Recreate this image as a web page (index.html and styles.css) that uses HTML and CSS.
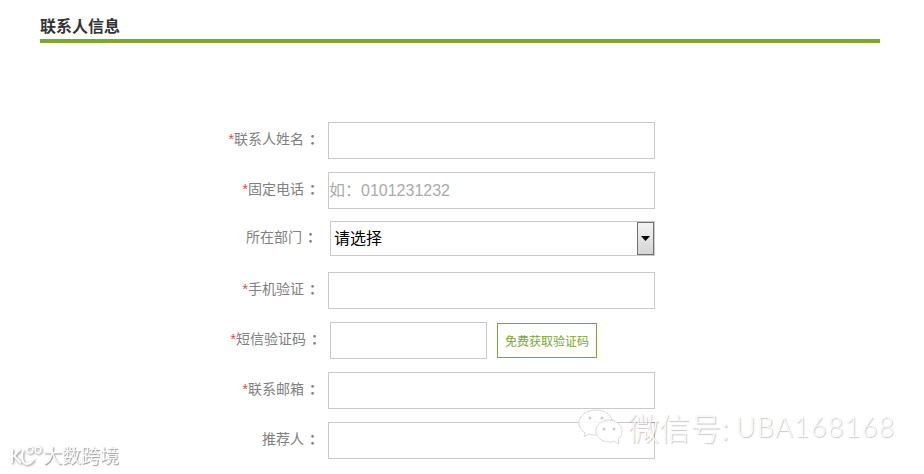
FILE: index.html
```html
<!DOCTYPE html>
<html lang="zh">
<head>
<meta charset="utf-8">
<title>联系人信息</title>
<link rel="stylesheet" href="styles.css">
</head>
<body>
<div class="page">
  <h2 class="title">联系人信息</h2>
  <form class="form">
    <div class="row">
      <label class="label"><i>*</i>联系人姓名<b>：</b></label>
      <input class="input" type="text">
    </div>
    <div class="row">
      <label class="label"><i>*</i>固定电话<b>：</b></label>
      <input class="input" type="text" placeholder="如：0101231232">
    </div>
    <div class="row row-select">
      <label class="label label-short">所在部门<b>：</b></label>
      <div class="select">
        <span class="select-text">请选择</span>
        <span class="select-btn"><svg width="9" height="5" viewBox="0 0 9 5"><path d="M0 0h9L4.500 5z" fill="#000"/></svg></span>
      </div>
    </div>
    <div class="row">
      <label class="label"><i>*</i>手机验证<b>：</b></label>
      <input class="input" type="text">
    </div>
    <div class="row">
      <label class="label label-wide"><i>*</i>短信验证码<b>：</b></label>
      <input class="input input-code" type="text">
      <button class="code-btn" type="button">免费获取验证码</button>
    </div>
    <div class="row">
      <label class="label"><i>*</i>联系邮箱<b>：</b></label>
      <input class="input" type="text">
    </div>
    <div class="row">
      <label class="label">推荐人<b>：</b></label>
      <input class="input" type="text">
    </div>
  </form>
  <div class="mark mark-left">
    <svg class="mark-logo" width="34" height="24" viewBox="0 0 34 24" fill="none" stroke="#fff" stroke-width="2">
      <path d="M3 4v14M11 4 5 11l7 7"/>
      <path d="M14 5c-2 7-1 14 4 14 3 0 5-2 7-5"/>
      <circle cx="21" cy="5" r="3" stroke-width="1.300"/>
      <circle cx="29" cy="5" r="3" stroke-width="1.300"/>
    </svg>
    <span>大数跨境</span>
  </div>
  <div class="mark mark-right">
    <svg class="mark-wechat" width="46" height="38" viewBox="0 0 46 38" fill="rgba(255,255,255,.85)" stroke="#d8d8d8" stroke-width="1">
      <path d="M19 2C9 2 2 8 2 15c0 4 2 7 6 10l-1 4 5-3c2 1 4 1 7 1 1 0 2 0 3-.3-2-7 3-14 13-14.500C34 6 27 2 19 2z"/>
      <path d="M32 12c-7 0-13 5-13 11s6 11 13 11c2 0 3 0 5-1l5 3-1-5c3-2 4-5 4-8 0-6-6-11-13-11z"/>
      <circle cx="13" cy="10" r="1.500" fill="#ccc" stroke="none"/>
      <circle cx="25" cy="10" r="1.500" fill="#ccc" stroke="none"/>
      <circle cx="27" cy="21" r="1.500" fill="#ccc" stroke="none"/>
      <circle cx="37" cy="21" r="1.500" fill="#ccc" stroke="none"/>
    </svg>
    <span class="mark-cjk">微信号:</span>
    <span class="mark-latin">UBA168168</span>
  </div>
</div>
</body>
</html>
```

FILE: styles.css
```css
* { box-sizing: border-box; }
html, body { margin: 0; padding: 0; background: #fff; }
.page {
  position: relative;
  width: 924px;
  height: 474px;
  overflow: hidden;
  padding: 0 44px 0 40px;
  font-family: "Liberation Sans", "Noto Sans CJK SC", sans-serif;
}
.title {
  margin: 0;
  height: 43px;
  padding-top: 16px;
  border-bottom: 4px solid #7aa82d;
  font-size: 16px;
  line-height: 21px;
  font-weight: bold;
  color: #333;
}
.form { padding-top: 79px; }
.row {
  display: flex;
  align-items: center;
  height: 37px;
  margin-bottom: 13px;
}
.label {
  width: 278px;
  margin-right: 10px;
  padding-bottom: 4px;
  text-align: right;
  font-size: 14px;
  line-height: 20px;
  color: #808080;
}
.label i { color: #e2483d; font-style: normal; }
.label b {
  display: inline-block;
  width: 14px;
  text-indent: 5px;
  text-align: left;
  white-space: nowrap;
  font-weight: bold;
}
.label-short { width: 276px; margin-right: 14px; }
.label-wide { width: 280px; }
.input {
  width: 327px;
  height: 37px;
  padding: 0;
  border: 1px solid #c9c9c9;
  background: #fff;
  font: 16px "Liberation Sans", "Noto Sans CJK SC", sans-serif;
  color: #333;
}
.input::placeholder { color: #aaa; opacity: 1; }
.input-code { width: 157px; }
.row-select { height: 35px; margin: -1px 0 16px; }
.select {
  display: flex;
  align-items: center;
  width: 325px;
  height: 35px;
  border: 1px solid #c9c9c9;
  background: #fff;
}
.select-text {
  flex: 1;
  padding: 0 0 4px 3px;
  font-size: 16px;
  color: #000;
}
.select-btn {
  display: flex;
  align-items: center;
  justify-content: center;
  width: 17px;
  height: 33px;
  border: 1px solid #707070;
  background: linear-gradient(#f4f4f4, #d4d4d4);
}
.code-btn {
  width: 100px;
  height: 35px;
  margin-left: 10px;
  padding: 0;
  border: 1px solid #7aa82d;
  background: #fff;
  color: #7aa82d;
  font: 12px "Liberation Sans", "Noto Sans CJK SC", sans-serif;
}
.mark {
  position: absolute;
  display: flex;
  align-items: center;
  color: rgba(255, 255, 255, .9);
  white-space: nowrap;
}
.mark-left {
  left: 9px;
  top: 445px;
  font-size: 19px;
  line-height: 24px;
  text-shadow: 1px 1px 1px rgba(0, 0, 0, .4), -.5px -.5px 0 rgba(0, 0, 0, .08);
  filter: blur(.4px);
}
.mark-logo { filter: drop-shadow(1px 1px 1px rgba(0, 0, 0, .45)); }
.mark-right {
  left: 577px;
  top: 408px;
  font-weight: 300;
  line-height: 38px;
  text-shadow: 1px 1px 1px rgba(0, 0, 0, .22), -.5px -.5px 0 rgba(0, 0, 0, .06);
}
.mark-cjk {
  margin-left: 5px;
  font-family: "Noto Sans CJK SC", sans-serif;
  font-size: 31px;
  font-weight: 300;
}
.mark-latin {
  margin-left: 7px;
  font-family: "Lato", sans-serif;
  font-size: 27px;
  font-weight: 300;
  letter-spacing: 1.300px;
}
```
